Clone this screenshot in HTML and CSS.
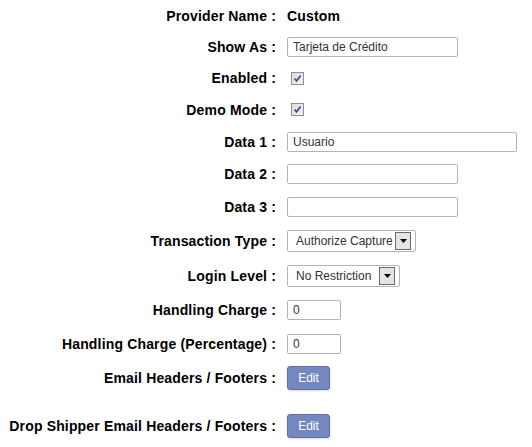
FILE: index.html
```html
<!DOCTYPE html>
<html lang="es">
<head>
<meta charset="utf-8">
<title>Provider</title>
<link rel="stylesheet" href="styles.css">
</head>
<body>
<form class="form">
  <label class="lbl">Provider Name :</label>
  <div class="val"><span class="static">Custom</span></div>

  <label class="lbl" for="showas">Show As :</label>
  <div class="val"><input id="showas" class="txt w171" type="text" value="Tarjeta de Crédito"></div>

  <label class="lbl">Enabled :</label>
  <div class="val"><span class="check"><svg width="11" height="11" viewBox="0 0 11 11"><path d="M2.5 5.5 L4.5 7.8 L8.6 2.6" fill="none" stroke="#3d4f8f" stroke-width="1.7"/></svg></span></div>

  <label class="lbl">Demo Mode :</label>
  <div class="val"><span class="check"><svg width="11" height="11" viewBox="0 0 11 11"><path d="M2.5 5.5 L4.5 7.8 L8.6 2.6" fill="none" stroke="#3d4f8f" stroke-width="1.7"/></svg></span></div>

  <label class="lbl" for="d1">Data 1 :</label>
  <div class="val"><input id="d1" class="txt w230" type="text" value="Usuario"></div>

  <label class="lbl" for="d2">Data 2 :</label>
  <div class="val"><input id="d2" class="txt w171" type="text" value=""></div>

  <label class="lbl" for="d3">Data 3 :</label>
  <div class="val"><input id="d3" class="txt w171" type="text" value=""></div>

  <label class="lbl">Transaction Type :</label>
  <div class="val">
    <span class="select w129"><span class="sel-text">Authorize Capture</span><span class="arrow"><svg width="7" height="4" viewBox="0 0 7 4"><path d="M0 0 H7 L3.5 4 Z" fill="#000"/></svg></span></span>
  </div>

  <label class="lbl">Login Level :</label>
  <div class="val">
    <span class="select w113"><span class="sel-text">No Restriction</span><span class="arrow"><svg width="7" height="4" viewBox="0 0 7 4"><path d="M0 0 H7 L3.5 4 Z" fill="#000"/></svg></span></span>
  </div>

  <label class="lbl" for="hc">Handling Charge :</label>
  <div class="val"><input id="hc" class="txt w54" type="text" value="0"></div>

  <label class="lbl" for="hcp">Handling Charge (Percentage) :</label>
  <div class="val"><input id="hcp" class="txt w54" type="text" value="0"></div>

  <label class="lbl">Email Headers / Footers :</label>
  <div class="val"><button type="button" class="btn">Edit</button></div>

  <label class="lbl spaced">Drop Shipper Email Headers / Footers :</label>
  <div class="val spaced"><button type="button" class="btn">Edit</button></div>
</form>
</body>
</html>
```

FILE: styles.css
```css
html, body {
  margin: 0;
  padding: 0;
  background: #fff;
}

body {
  font-family: "Liberation Sans", Arial, sans-serif;
  color: #000;
}

.form {
  display: grid;
  grid-template-columns: 276px 1fr;
  grid-template-rows: 31px 31px 32px 31px 33px 32px 33px 35px 35px 34px 33px 36px 46px;
  column-gap: 11px;
  align-items: center;
}

.lbl {
  text-align: right;
  font-weight: bold;
  font-size: 14px;
  line-height: 16px;
  letter-spacing: 0.16px;
  white-space: nowrap;
}

.val {
  display: flex;
  align-items: center;
}

.spaced {
  padding-top: 14px;
}

.static {
  font-weight: bold;
  font-size: 14px;
  line-height: 16px;
  letter-spacing: 0.16px;
}

.txt {
  box-sizing: border-box;
  height: 20px;
  margin: 0;
  padding: 0 4px 0 5px;
  border: 1px solid #b4b4b4;
  border-radius: 2px;
  font-family: "Liberation Sans", Arial, sans-serif;
  font-size: 12px;
  color: #333;
  background: #fff;
  outline: none;
}

.w171 { width: 171px; }
.w230 { width: 230px; }
.w54 { width: 54px; }
.w129 { width: 129px; }
.w113 { width: 113px; }

.check {
  box-sizing: border-box;
  width: 13px;
  height: 13px;
  margin-left: 4px;
  border: 1px solid #8e8f8f;
  background: linear-gradient(135deg, #dcdcdc, #f4f4f4);
  display: flex;
  align-items: center;
  justify-content: center;
}

.select {
  box-sizing: border-box;
  height: 22px;
  border: 1px solid #b5b5b5;
  border-radius: 2px;
  display: flex;
  align-items: center;
  justify-content: space-between;
  padding: 0 4px 0 8px;
  background: #fff;
}

.sel-text {
  font-size: 12px;
  color: #333;
  white-space: nowrap;
}

.arrow {
  box-sizing: border-box;
  width: 16px;
  height: 18px;
  border: 1px solid #6b6b6b;
  background: #e4e4e4;
  display: flex;
  align-items: center;
  justify-content: center;
  flex: none;
}

.btn {
  box-sizing: border-box;
  width: 43px;
  height: 24px;
  margin: 0;
  padding: 0;
  border: 1px solid #5f71ab;
  border-radius: 3px;
  background: #7488bf;
  color: #fff;
  font-family: "Liberation Sans", Arial, sans-serif;
  font-size: 12px;
  box-shadow: 0 1px 2px rgba(0, 0, 0, 0.15);
  cursor: pointer;
}
```
